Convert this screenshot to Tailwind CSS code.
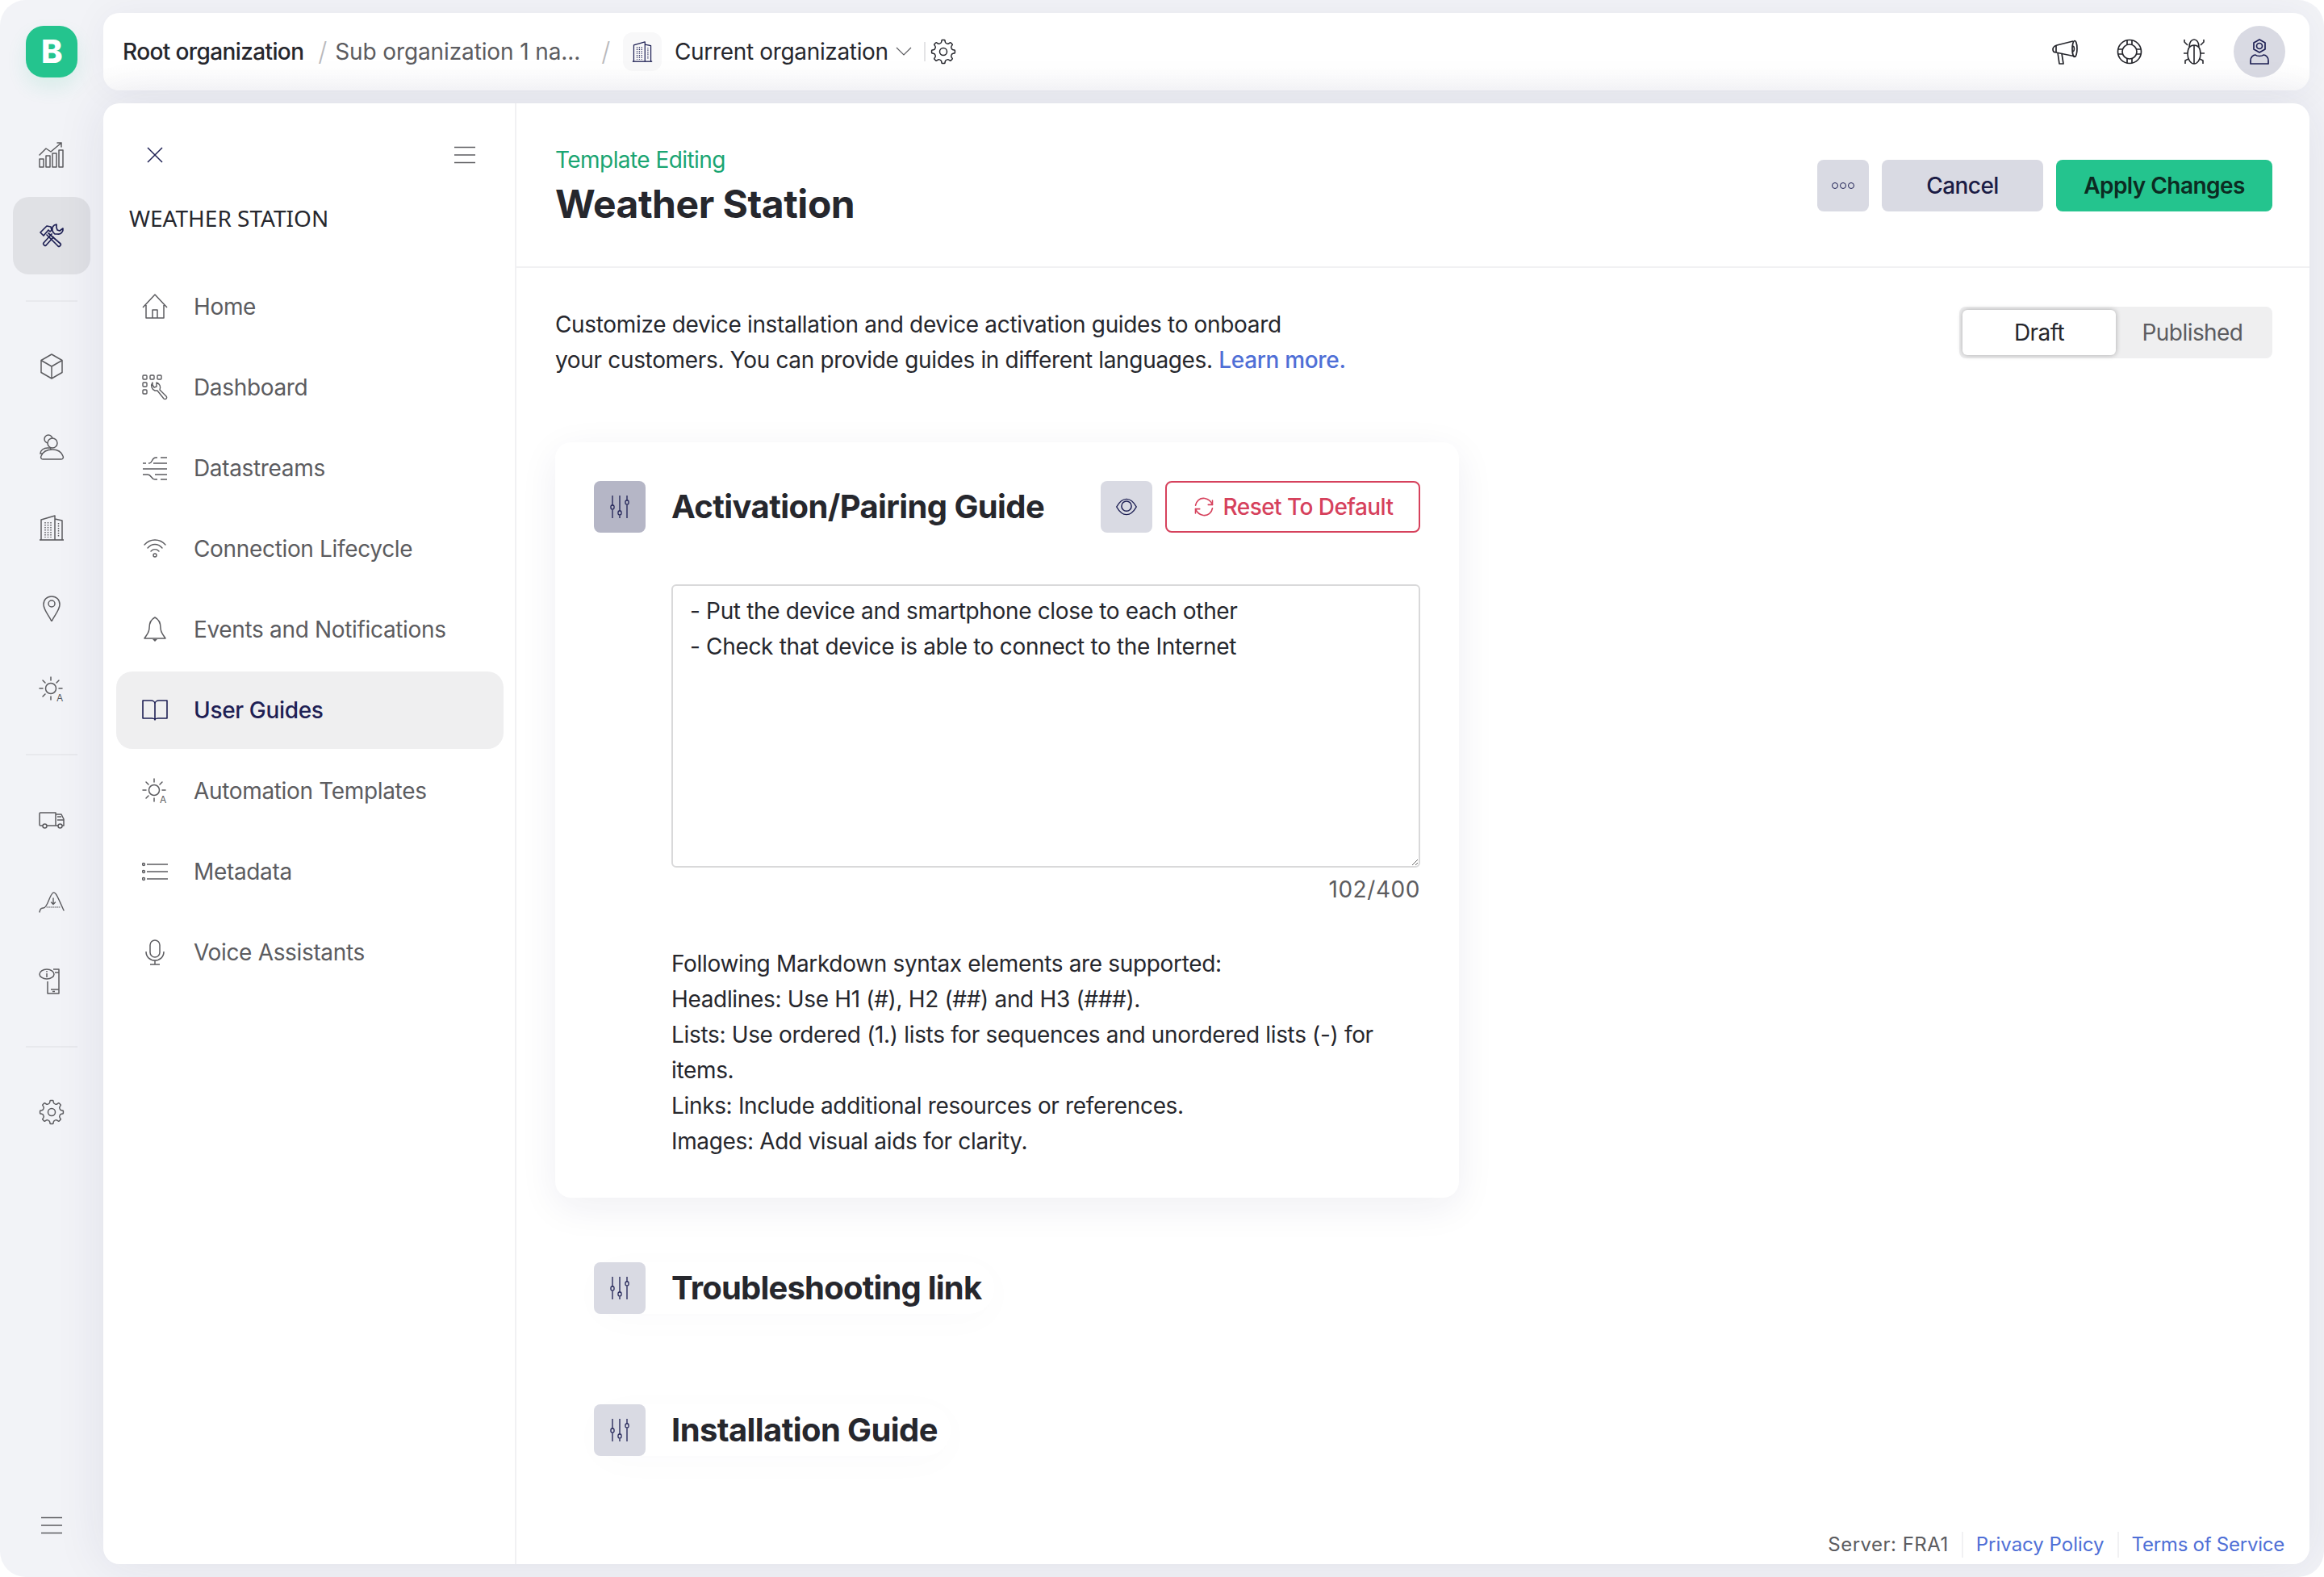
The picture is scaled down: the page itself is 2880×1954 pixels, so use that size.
<!DOCTYPE html>
<html lang="en">
<head>
  <meta charset="UTF-8">
  <title>Weather Station - Template Editing</title>
  <script src="https://cdn.jsdelivr.net/npm/@tailwindcss/browser@4"></script>
</head>
<body class="bg-white">
  <!-- icon sprite -->
  <svg class="hidden" xmlns="http://www.w3.org/2000/svg">
    <symbol id="i-chart" viewBox="0 0 32 32"><g fill="none" stroke="currentColor" stroke-width="1.5" stroke-linejoin="round" stroke-linecap="round"><rect x="1" y="21" width="5" height="10"/><rect x="9" y="17" width="5" height="14"/><rect x="17" y="14" width="5" height="17"/><rect x="25" y="10" width="5" height="21"/><path d="M1 16 9 8l6 4L28 1M23 1h5v5"/></g></symbol>
    <symbol id="i-tools" viewBox="0 0 32 32"><g fill="none" stroke="currentColor" stroke-width="1.7" stroke-linejoin="round" stroke-linecap="round"><path d="M2 12 10 4l5 1 1 4-2 2-2-2-6 7zM12 13l15 13a1.500 1.500 0 0 1 0 2l-1 1a1.500 1.500 0 0 1-2 0L10 15"/><path d="M22 2a6 6 0 0 0-5 8l1 2 2 2 3 0a6 6 0 0 0 7-7l-4 3-3-1-1-3zM16 14 6 25a1.500 1.500 0 0 0 0 2l1 1a1.500 1.500 0 0 0 2 0l9-10"/></g></symbol>
    <symbol id="i-cube" viewBox="0 0 32 32"><path d="M16 1 29 8.500V23.500L16 31 3 23.500V8.500ZM3 8.500l13 7.500 13-7.500M16 16V31" fill="none" stroke="currentColor" stroke-width="1.5" stroke-linejoin="round"/></symbol>
    <symbol id="i-people" viewBox="0 0 32 32"><g stroke="currentColor" stroke-width="1.500" fill="#f2f3f7"><circle cx="12" cy="6" r="5"/><circle cx="17" cy="11" r="6"/><path d="M2 24c0-4 4-7 9-7h3c2 0 1 7-1 7z"/><path d="M5 31c-2 0-3-2-2-4 2-5 7-8 14-8s11 3 13 8c1 2 0 4-2 4z"/></g></symbol>
    <symbol id="i-building" viewBox="0 0 32 32"><g fill="none" stroke="currentColor"><path d="M1 31H31" stroke-width="1.6"/><path d="M3 31V6L20 1V31M20 5l9 2V31" stroke-width="1.500" stroke-linejoin="round"/><path d="M8 9V28M11.500 9V28M15 9V28M24.500 10V28" stroke-width="1.500" stroke-dasharray="1.500 1.500"/></g></symbol>
    <symbol id="i-pin" viewBox="0 0 32 32"><g fill="none" stroke="currentColor" stroke-width="1.500"><path d="M16 1C10 1 6 5 6 11 6 18 13 25 16 32 19 25 26 18 26 11 26 5 22 1 16 1Z" stroke-linejoin="round"/><circle cx="16" cy="10" r="4"/></g></symbol>
    <symbol id="i-sun" viewBox="0 0 32 32"><g fill="none" stroke="currentColor" stroke-width="1.500" stroke-linecap="round"><circle cx="15" cy="15" r="6.500"/><path d="M15 1V5M15 25V29M1 15H5M25 15H29M5 5 8 8M22 8 25 5M5 25 8 22"/></g><text x="22" y="31" font-family="Inter" font-size="12" fill="currentColor">A</text></symbol>
    <symbol id="i-truck" viewBox="0 0 32 32"><g fill="none" stroke="currentColor" stroke-width="1.500" stroke-linejoin="round"><path d="M5 23H2a1 1 0 0 1-1-1V8a1 1 0 0 1 1-1H21V23H10M24 23H21M21 9H28L31 15V23H29"/><path d="M23 12H28M23 16H31"/><circle cx="7.500" cy="23.500" r="2.500"/><circle cx="26.500" cy="23.500" r="2.500"/></g></symbol>
    <symbol id="i-peak" viewBox="0 0 32 32"><g fill="none" stroke="currentColor" stroke-width="1.400" stroke-linecap="round"><path d="M1 30C2 25 4 25 6 25 11 25 13 9 18 6 21 5 23 10 31 28"/><path d="M10 24H27" stroke-dasharray="1 1.500" stroke-width="1"/><path d="M18 13V20M15.500 18 18 20.500 20.500 18"/></g></symbol>
    <symbol id="i-device" viewBox="0 0 32 32"><g fill="none" stroke="currentColor" stroke-width="1.500" stroke-linejoin="round"><path d="M11 16V31H25V1H18M15 26H25M17 28.500H20M20 5H25"/><ellipse cx="10" cy="7" rx="9" ry="6" fill="#f2f3f7"/><path d="M10 6V11M10 3V4.500"/></g></symbol>
    <symbol id="i-gear" viewBox="0 0 32 32"><g fill="none" stroke="currentColor" stroke-width="1.500" stroke-linejoin="round">
      <path d="M11.790 5.840Q13.500 5.400 13.700 4L14 2.200Q14.100 1.600 14.800 1.600H17.200Q17.900 1.600 18 2.200L18.300 4Q18.500 5.400 20.210 5.840"/>
      <path transform="rotate(45 16 16)" d="M11.790 5.840Q13.500 5.400 13.700 4L14 2.200Q14.100 1.600 14.800 1.600H17.200Q17.900 1.600 18 2.200L18.300 4Q18.500 5.400 20.210 5.840"/>
      <path transform="rotate(90 16 16)" d="M11.790 5.840Q13.500 5.400 13.700 4L14 2.200Q14.100 1.600 14.800 1.600H17.200Q17.900 1.600 18 2.200L18.300 4Q18.500 5.400 20.210 5.840"/>
      <path transform="rotate(135 16 16)" d="M11.790 5.840Q13.500 5.400 13.700 4L14 2.200Q14.100 1.600 14.800 1.600H17.200Q17.900 1.600 18 2.200L18.300 4Q18.500 5.400 20.210 5.840"/>
      <path transform="rotate(180 16 16)" d="M11.790 5.840Q13.500 5.400 13.700 4L14 2.200Q14.100 1.600 14.800 1.600H17.200Q17.900 1.600 18 2.200L18.300 4Q18.500 5.400 20.210 5.840"/>
      <path transform="rotate(225 16 16)" d="M11.790 5.840Q13.500 5.400 13.700 4L14 2.200Q14.100 1.600 14.800 1.600H17.200Q17.900 1.600 18 2.200L18.300 4Q18.500 5.400 20.210 5.840"/>
      <path transform="rotate(270 16 16)" d="M11.790 5.840Q13.500 5.400 13.700 4L14 2.200Q14.100 1.600 14.800 1.600H17.200Q17.900 1.600 18 2.200L18.300 4Q18.500 5.400 20.210 5.840"/>
      <path transform="rotate(315 16 16)" d="M11.790 5.840Q13.500 5.400 13.700 4L14 2.200Q14.100 1.600 14.800 1.600H17.200Q17.900 1.600 18 2.200L18.300 4Q18.500 5.400 20.210 5.840"/>
      <circle cx="16" cy="16" r="4.500"/></g></symbol>
    <symbol id="i-menu" viewBox="0 0 32 32"><path d="M3 6.500H29M3 16H29M3 25.500H29" fill="none" stroke="currentColor" stroke-width="1.500"/></symbol>
    <symbol id="i-close" viewBox="0 0 32 32"><path d="M7 7 25 25M25 7 7 25" fill="none" stroke="currentColor" stroke-width="1.500"/></symbol>
    <symbol id="i-home" viewBox="0 0 32 32"><path d="M1 17 16 1 31 17M5 14V30H27V14M13 30V20H19V30" fill="none" stroke="currentColor" stroke-width="1.500" stroke-linejoin="round"/></symbol>
    <symbol id="i-dash" viewBox="0 0 32 32"><g fill="none" stroke="currentColor" stroke-width="1.400"><rect x="1" y="1" width="5" height="5" rx="1"/><rect x="10" y="1" width="5" height="5" rx="1"/><rect x="19" y="1" width="5" height="5" rx="1"/><rect x="1" y="10" width="5" height="5" rx="1"/><rect x="1" y="19" width="5" height="5" rx="1"/><path d="M13 10a6.500 6.500 0 0 0 3 10l3 0 8 10a2 2 0 0 0 3-3l-8-8a6.500 6.500 0 0 0-4-9v5l-3 1-2-3z" stroke-linejoin="round"/></g></symbol>
    <symbol id="i-stream" viewBox="0 0 32 32"><path d="M1 10H5M8 10H9C13 10 12 3 17 3H19M23 3H31M14 10H31M1 17H31M1 24H7C12 24 11 30 16 30H19M23 30H31M16 24H31M23 10H31" fill="none" stroke="currentColor" stroke-width="1.400"/></symbol>
    <symbol id="i-wifi" viewBox="0 0 32 32"><g fill="none" stroke="currentColor" stroke-width="1.400" stroke-linecap="round"><path d="M3 11C10 3 22 3 29 11M7 15C12 9 20 9 25 15M11 19C14 16 18 16 21 19"/><circle cx="16" cy="24" r="2"/></g></symbol>
    <symbol id="i-bell" viewBox="0 0 32 32"><path d="M16 1C10 4 9 9 9 14 9 20 6 22 3 27H29C26 22 23 20 23 14 23 9 22 4 16 1Z" fill="none" stroke="currentColor" stroke-width="1.500" stroke-linejoin="round"/><path d="M13 28H19L16 31Z" fill="currentColor"/></symbol>
    <symbol id="i-book" viewBox="0 0 32 32"><path d="M1 5H11C14 5 16 7 16 9 16 7 18 5 21 5H31V27H20C18 27 16 28 16 29 16 28 14 27 12 27H1ZM16 9V29" transform="translate(0 -1)" fill="none" stroke="currentColor" stroke-width="1.600" stroke-linejoin="round"/></symbol>
    <symbol id="i-list" viewBox="0 0 32 32"><g fill="none" stroke="currentColor" stroke-width="1.400"><path d="M6 7H32M6 16H32M6 25H32"/><circle cx="2" cy="7" r="1.500"/><circle cx="2" cy="16" r="1.500"/><circle cx="2" cy="25" r="1.500"/></g></symbol>
    <symbol id="i-mic" viewBox="0 0 32 32"><g fill="none" stroke="currentColor" stroke-width="1.500"><rect x="10" y="1" width="12" height="21" rx="6"/><path d="M5 15C5 22 10 26 16 26S27 22 27 15M16 26V31M10 31H22"/></g></symbol>
    <symbol id="i-chevron" viewBox="0 0 20 20"><path d="M1 5 10 14 19 5" fill="none" stroke="currentColor" stroke-width="1.200"/></symbol>
    <symbol id="i-mega" viewBox="0 0 32 32"><g fill="none" stroke="currentColor" stroke-width="1.700" stroke-linejoin="round"><path d="M26 3 6 8C3 9 1 11 1 13 1 15 2 17 5 17L29 22"/><ellipse cx="28" cy="12.500" rx="3" ry="10"/><path d="M7 17 9 31H14L12 18M5 8V17"/><path d="M26 9C28 10 28 15 26 16"/></g></symbol>
    <symbol id="i-ring" viewBox="0 0 32 32"><g fill="none" stroke="currentColor" stroke-width="1.700"><circle cx="16" cy="16" r="14.500"/><circle cx="16" cy="16" r="9"/><path d="M13 2V7.500M19 2V7.500M13 24.500V30M19 24.500V30M2 13H7.500M2 19H7.500M24.500 13H30M24.500 19H30"/></g></symbol>
    <symbol id="i-bug" viewBox="0 0 32 32"><g fill="none" stroke="currentColor" stroke-width="1.600" stroke-linejoin="round"><path d="M16 8C10 8 8 13 8 19 8 26 12 31 16 31S24 26 24 19C24 13 22 8 16 8ZM16 8V31"/><path d="M10 10C10 4 13 1 16 1S22 4 22 10"/><path d="M8 8 4 4V1M24 8 28 4V1M8 18H3M24 18H29M9 25 5 27V31M23 25 27 27V31"/></g></symbol>
    <symbol id="i-user" viewBox="0 0 32 32"><g fill="none" stroke="currentColor" stroke-width="1.700" stroke-linejoin="round"><path d="M16 1 23 5V13L16 17 9 13V5Z"/><circle cx="16" cy="9" r="3.500"/><path d="M5 31V27C5 23 8 20 11 20 13 22 19 22 21 20 24 20 27 23 27 27V31Z"/></g></symbol>
    <symbol id="i-sliders" viewBox="0 0 32 32"><g fill="none" stroke="currentColor" stroke-width="1.300"><path d="M7 2V14M7 20V30M16 2V21M16 27V30M25 2V8M25 14V30"/><rect x="5" y="14" width="4" height="5" rx="1.500"/><rect x="14" y="21" width="4" height="5" rx="1.500"/><rect x="23" y="8" width="4" height="5" rx="1.500"/></g></symbol>
    <symbol id="i-eye" viewBox="0 0 32 32"><g fill="none" stroke="currentColor" stroke-width="1.700"><path d="M2 16C7 7 12 5 16 5S25 7 30 16C25 25 20 27 16 27S7 25 2 16Z" stroke-linejoin="round"/><circle cx="16" cy="15" r="7"/></g></symbol>
    <symbol id="i-refresh" viewBox="0 0 32 32"><g fill="none" stroke="currentColor" stroke-width="1.800" stroke-linecap="round" stroke-linejoin="round"><path d="M4 14C5 8 10 3 17 4 22 5 26 8 28 13"/><path d="M28 18C27 24 22 29 15 28 10 27 6 24 4 19"/><path d="M28 7V13H22M4 25V19H10"/></g></symbol>
  </svg>

  <div class="w-[2880px] h-[1954px] flex rounded-[32px] bg-[#f2f3f7] overflow-hidden font-['Inter'] text-[28px] tracking-[-0.012em]">

    <!-- icon rail -->
    <aside class="w-[128px] shrink-0 flex flex-col items-center pt-8 pb-4 text-[#5c5c60]">
      <div class="w-16 h-16 rounded-[22px] bg-[#24c48e] shadow-[0_12px_24px_rgba(36,196,142,0.12)] flex items-center justify-center text-white font-extrabold text-[40px]">B</div>
      <div class="mt-12 flex flex-col gap-1">
        <a class="w-24 h-24 rounded-[20px] flex items-center justify-center"><svg class="w-8 h-8"><use href="#i-chart"/></svg></a>
        <a class="w-24 h-24 rounded-[20px] flex items-center justify-center bg-[#e0e1e5] text-[#1e2054]"><svg class="w-8 h-8"><use href="#i-tools"/></svg></a>
      </div>
      <div class="w-16 h-[2px] bg-[#e8e9ed] mt-8"></div>
      <div class="mt-8 flex flex-col gap-1">
        <a class="w-24 h-24 flex items-center justify-center"><svg class="w-8 h-8"><use href="#i-cube"/></svg></a>
        <a class="w-24 h-24 flex items-center justify-center"><svg class="w-8 h-8"><use href="#i-people"/></svg></a>
        <a class="w-24 h-24 flex items-center justify-center"><svg class="w-8 h-8"><use href="#i-building"/></svg></a>
        <a class="w-24 h-24 flex items-center justify-center"><svg class="w-8 h-8"><use href="#i-pin"/></svg></a>
        <a class="w-24 h-24 flex items-center justify-center"><svg class="w-8 h-8"><use href="#i-sun"/></svg></a>
      </div>
      <div class="w-16 h-[2px] bg-[#e8e9ed] mt-8"></div>
      <div class="mt-8 flex flex-col gap-1">
        <a class="w-24 h-24 flex items-center justify-center"><svg class="w-8 h-8"><use href="#i-truck"/></svg></a>
        <a class="w-24 h-24 flex items-center justify-center"><svg class="w-8 h-8"><use href="#i-peak"/></svg></a>
        <a class="w-24 h-24 flex items-center justify-center"><svg class="w-8 h-8"><use href="#i-device"/></svg></a>
      </div>
      <div class="w-16 h-[2px] bg-[#e8e9ed] mt-8"></div>
      <a class="mt-8 w-24 h-24 flex items-center justify-center"><svg class="w-8 h-8"><use href="#i-gear"/></svg></a>
      <a class="mt-auto w-24 h-24 flex items-center justify-center"><svg class="w-8 h-8"><use href="#i-menu"/></svg></a>
    </aside>

    <div class="flex-1 flex flex-col gap-4 pt-4 pb-4 pr-[18px]">

      <!-- top bar -->
      <header class="h-24 shrink-0 rounded-[20px] bg-gradient-to-b from-white from-70% to-[#f9f9fa] flex items-center pl-6 pr-[30px] shadow-[0_0_48px_rgba(30,32,84,0.05)]">
        <span class="font-medium text-[#26272d] tracking-[-0.022em]">Root organization</span>
        <span class="ml-[18px] text-[#b9b9bc] text-[32px] font-light">/</span>
        <span class="ml-[10px] text-[#5c5c60] tracking-[-0.004em]">Sub organization 1 na...</span>
        <span class="ml-[26px] text-[#b9b9bc] text-[32px] font-light">/</span>
        <span class="ml-[16px] w-12 h-12 rounded-xl bg-[#f8f8f9] flex items-center justify-center text-[#1e2054]"><svg class="w-[26px] h-[26px]"><use href="#i-building"/></svg></span>
        <span class="ml-4 text-[#26272d]">Current organization</span>
        <svg class="ml-[9px] w-5 h-5 text-[#5c5c60]"><use href="#i-chevron"/></svg>
        <span class="ml-[15px] w-[2px] h-6 bg-[#e4e4e6]"></span>
        <svg class="ml-[6px] w-8 h-8 text-[#26272d]"><use href="#i-gear"/></svg>
        <div class="ml-auto flex items-center text-[#26272d]">
          <svg class="w-8 h-8"><use href="#i-mega"/></svg>
          <svg class="ml-12 w-8 h-8"><use href="#i-ring"/></svg>
          <svg class="ml-12 w-8 h-8"><use href="#i-bug"/></svg>
          <span class="ml-[33px] w-16 h-16 rounded-full bg-[#d9dae3] flex items-center justify-center text-[#1e2054]"><svg class="w-8 h-8"><use href="#i-user"/></svg></span>
        </div>
      </header>

      <!-- main panel -->
      <main class="flex-1 flex rounded-[20px] bg-white shadow-[0_0_64px_rgba(30,32,84,0.09)] overflow-hidden">

        <!-- product sidebar -->
        <nav class="w-[512px] shrink-0 border-r-2 border-[#f1f1f3] pt-12 px-4 text-[#5c5c60]">
          <div class="flex items-center justify-between h-8 pl-8 pr-[30px]">
            <svg class="w-8 h-8 text-[#1e2054]"><use href="#i-close"/></svg>
            <svg class="w-8 h-8 text-[#5c5c60]"><use href="#i-menu"/></svg>
          </div>
          <div class="mt-[42px] pl-4 h-[40px] leading-[40px] font-['Noto_Sans'] tracking-normal text-[#26272d]">WEATHER STATION</div>
          <ul class="mt-[42px] flex flex-col gap-1 w-[480px]">
            <li class="h-24 rounded-[20px] flex items-center gap-8 pl-8"><svg class="w-8 h-8"><use href="#i-home"/></svg>Home</li>
            <li class="h-24 rounded-[20px] flex items-center gap-8 pl-8"><svg class="w-8 h-8"><use href="#i-dash"/></svg>Dashboard</li>
            <li class="h-24 rounded-[20px] flex items-center gap-8 pl-8"><svg class="w-8 h-8"><use href="#i-stream"/></svg>Datastreams</li>
            <li class="h-24 rounded-[20px] flex items-center gap-8 pl-8"><svg class="w-8 h-8"><use href="#i-wifi"/></svg>Connection Lifecycle</li>
            <li class="h-24 rounded-[20px] flex items-center gap-8 pl-8"><svg class="w-8 h-8"><use href="#i-bell"/></svg>Events and Notifications</li>
            <li class="h-24 rounded-[20px] flex items-center gap-8 pl-8 bg-[#efeff0] text-[#1e2054] font-medium"><svg class="w-8 h-8"><use href="#i-book"/></svg>User Guides</li>
            <li class="h-24 rounded-[20px] flex items-center gap-8 pl-8"><svg class="w-8 h-8"><use href="#i-sun"/></svg>Automation Templates</li>
            <li class="h-24 rounded-[20px] flex items-center gap-8 pl-8"><svg class="w-8 h-8"><use href="#i-list"/></svg>Metadata</li>
            <li class="h-24 rounded-[20px] flex items-center gap-8 pl-8"><svg class="w-8 h-8"><use href="#i-mic"/></svg>Voice Assistants</li>
          </ul>
        </nav>

        <section class="flex-1 flex flex-col">
          <!-- page header -->
          <div class="h-[204px] shrink-0 border-b-2 border-[#f1f1f3] pl-12 pr-[46px] pt-[50px] flex items-start justify-between">
            <div>
              <div class="leading-[40px] text-[#1aa572] tracking-[-0.02em]">Template Editing</div>
              <h1 class="mt-[5px] leading-[60px] text-[48px] font-bold tracking-[-0.01em] text-[#26272d]">Weather Station</h1>
            </div>
            <div class="mt-5 flex gap-4">
              <button class="w-16 h-16 rounded-lg bg-[#d9dae3] flex items-center justify-center gap-[2px]">
                <span class="w-2 h-2 rounded-full border-[1.500px] border-[#1e2054]"></span>
                <span class="w-2 h-2 rounded-full border-[1.500px] border-[#1e2054]"></span>
                <span class="w-2 h-2 rounded-full border-[1.500px] border-[#1e2054]"></span>
              </button>
              <button class="w-[200px] h-16 rounded-lg bg-[#d9dae3] text-[#1b1c45] font-medium tracking-[-0.02em]">Cancel</button>
              <button class="w-[268px] h-16 rounded-lg bg-[#24c48e] text-[#0c2b22] font-semibold tracking-[-0.02em]">Apply Changes</button>
            </div>
          </div>

          <div class="flex-1 flex flex-col pt-12 pl-12 pr-[46px]">
            <div class="flex items-start justify-between">
              <p class="leading-[44px] text-[#26272d]">Customize device installation and device activation guides to onboard<br>your customers. You can provide guides in different languages. <a class="text-[#4f6fd6] font-medium">Learn more.</a></p>
              <div class="w-[388px] h-16 rounded-lg bg-[#efeff0] p-1 flex">
                <span class="w-[190px] rounded-md bg-white shadow-[0_0_6px_rgba(0,0,0,0.3)] flex items-center justify-center text-[#26272d] tracking-[-0.02em]">Draft</span>
                <span class="flex-1 flex items-center justify-center text-[#5c5c60] tracking-[-0.02em]">Published</span>
              </div>
            </div>

            <!-- activation guide card -->
            <div class="mt-20 w-[1120px] rounded-[20px] bg-white p-12 shadow-[0_12px_48px_rgba(30,32,84,0.07)]">
              <div class="flex items-center h-16">
                <span class="w-16 h-16 rounded-lg bg-[#b5b6c6] flex items-center justify-center text-[#1e2054]"><svg class="w-8 h-8"><use href="#i-sliders"/></svg></span>
                <h2 class="ml-8 text-[40px] font-bold tracking-[-0.015em] text-[#26272d]">Activation/Pairing Guide</h2>
                <button class="ml-auto w-16 h-16 rounded-lg bg-[#d9dae3] flex items-center justify-center text-[#1e2054]"><svg class="w-7 h-7"><use href="#i-eye"/></svg></button>
                <button class="ml-4 w-[316px] h-16 rounded-lg border-2 border-[#d6415c] text-[#d6415c] flex items-center justify-center gap-[10px] font-medium tracking-[-0.02em]"><svg class="w-7 h-7"><use href="#i-refresh"/></svg>Reset To Default</button>
              </div>
              <div class="pl-24">
                <textarea class="mt-16 block w-[928px] h-[351px] rounded-md border-2 border-[#d9d9da] pl-[21px] pr-5 pt-[9px] leading-[44px] text-[#26272d] outline-none">- Put the device and smartphone close to each other
- Check that device is able to connect to the Internet</textarea>
                <div class="mt-[5px] text-right leading-[44px] text-[#5c5c60] tracking-[0.02em]">102/400</div>
                <div class="mt-12 leading-[44px] text-[#26272d]">
                  <p>Following Markdown syntax elements are supported:</p>
                  <p>Headlines: Use H1 (#), H2 (##) and H3 (###).</p>
                  <p>Lists: Use ordered (1.) lists for sequences and unordered lists (-) for items.</p>
                  <p>Links: Include additional resources or references.</p>
                  <p>Images: Add visual aids for clarity.</p>
                </div>
              </div>
            </div>

            <div class="mt-20 ml-12 w-fit pr-4 rounded-[32px] flex items-center h-16 shadow-[0_8px_48px_rgba(30,32,84,0.02)]">
              <span class="w-16 h-16 rounded-lg bg-[#d9dae3] flex items-center justify-center text-[#1e2054]"><svg class="w-8 h-8"><use href="#i-sliders"/></svg></span>
              <h2 class="ml-8 text-[40px] font-bold tracking-[-0.02em] text-[#26272d]">Troubleshooting link</h2>
            </div>
            <div class="mt-28 ml-12 w-fit pr-4 rounded-[32px] flex items-center h-16 shadow-[0_8px_48px_rgba(30,32,84,0.02)]">
              <span class="w-16 h-16 rounded-lg bg-[#d9dae3] flex items-center justify-center text-[#1e2054]"><svg class="w-8 h-8"><use href="#i-sliders"/></svg></span>
              <h2 class="ml-8 text-[40px] font-bold tracking-[-0.015em] text-[#26272d]">Installation Guide</h2>
            </div>

            <!-- footer -->
            <div class="mt-auto mb-[6px] -mr-[15px] flex items-center justify-end text-[24px] tracking-[-0.01em] text-[#5c5c60]">
              <span class="tracking-[0.02em]">Server: FRA1</span>
              <span class="mx-4 w-[2px] h-8 bg-[#f1f1f3]"></span>
              <a class="text-[#4f6fd6] tracking-[0em]">Privacy Policy</a>
              <span class="mx-4 w-[2px] h-8 bg-[#f1f1f3]"></span>
              <a class="text-[#4f6fd6]">Terms of Service</a>
            </div>
          </div>
        </section>
      </main>
    </div>
  </div>
</body>
</html>
